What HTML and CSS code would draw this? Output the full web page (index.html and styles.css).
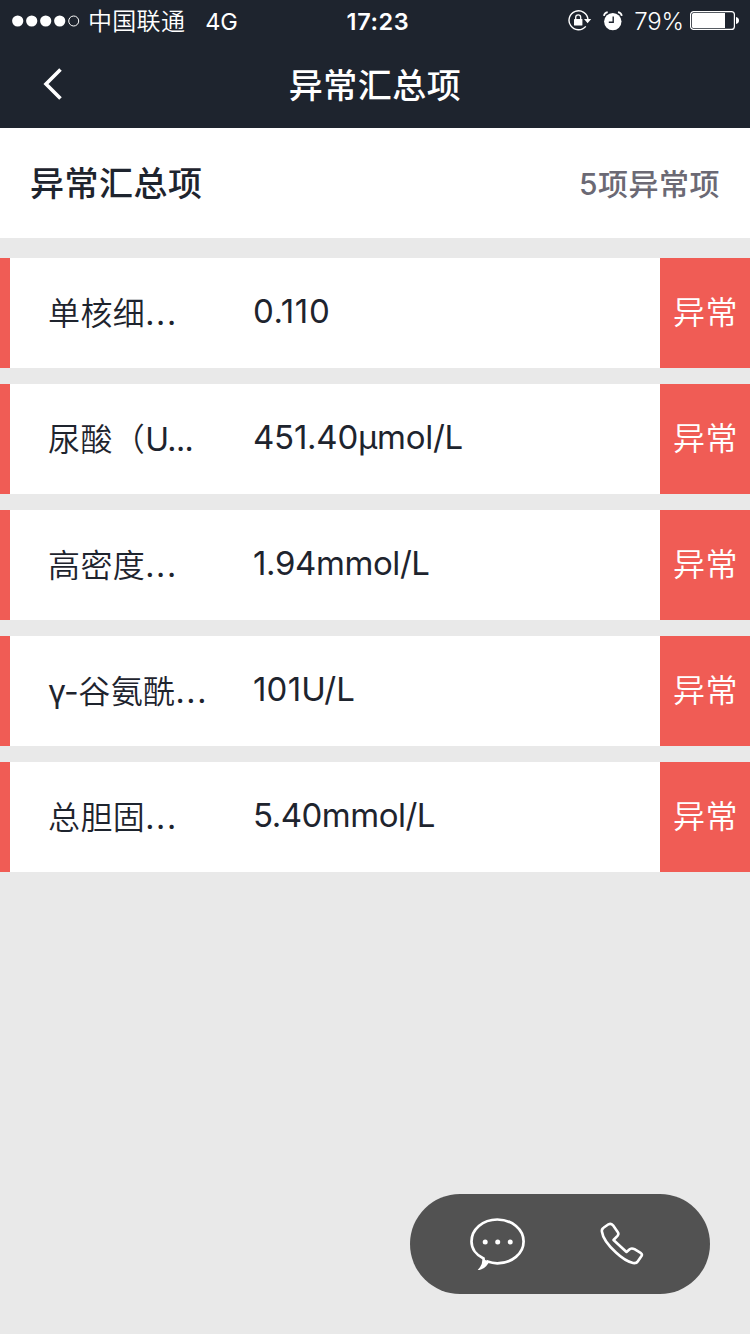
FILE: index.html
```html
<!DOCTYPE html>
<html lang="zh-CN">
<head>
<meta charset="utf-8">
<title>异常汇总项</title>
<link rel="stylesheet" href="styles.css">
</head>
<body>
<div class="screen">
  <header class="top">
    <div class="status">
      <div class="status-left">
        <svg class="signal" width="68" height="12" viewBox="0 0 68 12"><g fill="#fff"><circle cx="5.700" cy="6" r="5.600"/><circle cx="19.700" cy="6" r="5.600"/><circle cx="33.700" cy="6" r="5.600"/><circle cx="47.700" cy="6" r="5.600"/></g><circle cx="61.700" cy="6" r="5" fill="none" stroke="#fff"/></svg>
        <span class="carrier">中国联通</span><span class="network">4G</span>
      </div>
      <span class="clock">17:23</span>
      <div class="status-right">
        <svg class="lock" width="24" height="22" viewBox="0 0 24 22"><path d="M17.800 16.400A9.500 9.500 0 1 1 20 9.500" fill="none" stroke="#fff" stroke-width="1.400"/><path d="M16 9h7.200l-3.600 4.200z" fill="#fff"/><rect x="6" y="9" width="8.400" height="6.600" rx=".6" fill="#fff"/><path d="M7.700 9.500V7.300a2.500 2.500 0 0 1 5 0v2.200" fill="none" stroke="#fff" stroke-width="1.300"/></svg>
        <svg class="alarm" width="20" height="20" viewBox="0 0 20 20"><circle cx="9.800" cy="10.600" r="8.700" fill="#fff"/><path d="M10.200 5.600v5.700H5.800" fill="none" stroke="#1e242e" stroke-width="1.400"/><path d="M.9 4.800Q1.400 1.700 4.700 1.100M15 1.100q3.300.6 3.800 3.700" fill="none" stroke="#fff" stroke-width="1.700"/></svg>
        <span class="percent">79%</span>
        <svg class="battery" width="49" height="19" viewBox="0 0 49 19"><rect x=".6" y=".6" width="43.800" height="17.800" rx="3" fill="none" stroke="#fff" stroke-width="1.200"/><path d="M3.500 2H35v15H3.500Q2 17 2 15.500V3.500Q2 2 3.500 2z" fill="#fff"/><path d="M46 6q3 .6 3 3.500T46 13z" fill="#fff"/></svg>
      </div>
    </div>
    <nav class="nav">
      <svg class="back" width="20" height="32" viewBox="0 0 20 32"><path d="M17.500 1.500 3 16 17.500 30.500" fill="none" stroke="#fff" stroke-width="3.600"/></svg>
      <h1 class="nav-title">异常汇总项</h1>
    </nav>
  </header>
  <section class="summary">
    <h2 class="summary-title">异常汇总项</h2>
    <span class="summary-count">5项异常项</span>
  </section>
  <main class="list">
    <div class="row"><span class="name">单核细<span class="dots">...</span></span><span class="value v1">0.110</span><span class="tag">异常</span></div>
    <div class="row"><span class="name">尿酸（<span class="latin">U...</span></span><span class="value v2">451.40μmol/L</span><span class="tag">异常</span></div>
    <div class="row"><span class="name">高密度<span class="dots">...</span></span><span class="value v3">1.94mmol/L</span><span class="tag">异常</span></div>
    <div class="row"><span class="name"><span class="gamma">γ-</span>谷氨酰<span class="dots">...</span></span><span class="value v4">101U/L</span><span class="tag">异常</span></div>
    <div class="row"><span class="name">总胆固<span class="dots">...</span></span><span class="value v5">5.40mmol/L</span><span class="tag">异常</span></div>
  </main>
  <div class="contact">
    <svg class="chat" width="58" height="54" viewBox="0 0 58 54"><path d="M15.500 42.500C8 39 3.500 32.500 3.500 25.500 3.500 13.500 14.500 3.500 29.300 3.500s26.300 10 26.300 22S44 47.300 29.300 47.300q-5 0-9.800-1.700-1.500 4.500-6.500 6.400 3.200-4 2.500-9.500z" fill="none" stroke="#fff" stroke-width="2.700"/><path d="M16 43l3.500 2.500q-1.500 5-8 7.200 4.500-4 4.500-9.700z" fill="#fff"/><g fill="#fff"><circle cx="17.200" cy="26" r="2.500"/><circle cx="29.700" cy="26" r="2.500"/><circle cx="42.200" cy="26" r="2.500"/></g></svg>
    <svg class="phone" width="46" height="46" viewBox="0 0 46 46"><path d="M4.500 6.800 9.500 3.300Q12 2 14 4.300L19 11.500Q20 13 18.500 14.800L14.500 19 27.500 31 31 28Q33 26.800 35.500 28.200L42 32.200Q43.500 33.300 42.500 35L38.700 40.500Q37.500 42.500 34 42 26 40 17 31.500 4 19.500 2.900 10.500 2.500 8 4.500 6.800z" fill="none" stroke="#fff" stroke-width="2.600" stroke-linejoin="round"/></svg>
  </div>
</div>
</body>
</html>
```
FILE: styles.css
```css
* { box-sizing: border-box; }
body { margin: 0; font-family: Inter, "Noto Sans CJK SC", sans-serif; color: #1e242e; }
svg { display: block; flex: none; }
.screen { position: relative; width: 750px; height: 1334px; background: #e9e9e9; overflow: hidden; }
.top { height: 128px; background: #1e242e; color: #fff; }
.status { height: 41px; display: grid; grid-template-columns: 1fr auto 1fr; align-items: center; padding: 1px 11px 0 12px; font-size: 24px; line-height: 40px; white-space: nowrap; }
.status-left, .status-right { display: flex; align-items: center; }
.status-right { justify-content: flex-end; }
.signal { margin-bottom: 1px; }
.carrier { margin-left: 8px; font-weight: 350; letter-spacing: .3px; padding-top: 1px; }
.network { margin-left: 20px; font-size: 23.500px; font-weight: 400; letter-spacing: -.2px; }
.clock { font-size: 23.500px; font-weight: 600; letter-spacing: .6px; padding-left: 5px; }
.lock { margin: 0 11px 1px 0; }
.alarm { margin: 0 11px 1px 0; }
.percent { font-size: 24px; font-weight: 350; letter-spacing: -.1px; margin-right: 6px; }
.battery { margin-bottom: 2px; }
.nav { position: relative; height: 85px; display: flex; align-items: center; justify-content: center; }
.back { position: absolute; left: 43px; top: 27px; }
.nav-title, .summary-title { margin: 0; font-size: 34px; font-weight: 500; letter-spacing: .5px; line-height: 48px; white-space: nowrap; font-family: "Noto Sans CJK SC", sans-serif; }
.summary { height: 110px; display: flex; align-items: center; justify-content: space-between; padding: 0 30px; background: #fff; }
.summary-title { padding-bottom: 2px; }
.summary-count { font-size: 30px; font-weight: 500; letter-spacing: .5px; color: #6b6974; padding-bottom: 2px; }
.list { display: flex; flex-direction: column; gap: 16px; padding-top: 20px; }
.row { display: grid; grid-template-columns: 204px 1fr 90px; align-items: center; height: 110px; padding-left: 38px; border-left: 10px solid #f05c55; background: #fff; white-space: nowrap; line-height: 48px; }
.name { font-size: 32px; font-weight: 350; letter-spacing: .4px; padding-top: 1px; }
.dots { font-weight: 400; letter-spacing: 1.700px; }
.latin { font-weight: 400; letter-spacing: -.6px; }
.gamma { font-weight: 400; letter-spacing: -.6px; }
.value { font-size: 33px; padding: 0 0 4px 1px; }
.v1 { letter-spacing: .6px; }
.v2 { letter-spacing: -.25px; }
.v3 { letter-spacing: -.4px; }
.v4 { letter-spacing: .2px; }
.v5 { letter-spacing: -.5px; }
.tag { align-self: stretch; display: flex; align-items: center; justify-content: center; background: #f05c55; color: #fff; font-size: 32px; font-weight: 350; letter-spacing: .5px; padding-left: 1px; }
.contact { position: absolute; left: 410px; top: 1194px; width: 300px; height: 100px; border-radius: 50px; background: #525252; display: flex; align-items: center; padding: 0 0 2px 58px; gap: 73px; }
.phone { margin-top: 2px; }
```
